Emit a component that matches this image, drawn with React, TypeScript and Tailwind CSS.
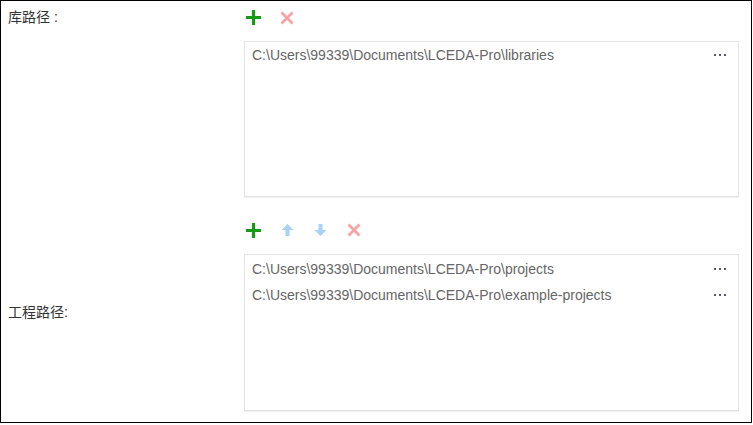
import React from "react";

const font = { fontFamily: '"Liberation Sans", Arial, "Noto Sans CJK SC", sans-serif' };

function Plus() {
  return (
    <svg width="17" height="17" viewBox="0 0 17 17">
      <path d="M8.5 1V16M1 8.5H16" stroke="#169b16" strokeWidth="3.2" />
    </svg>
  );
}
function Cross() {
  return (
    <svg width="14" height="14" viewBox="0 0 14 14">
      <path d="M1.5 1.5L12.5 12.5M12.5 1.5L1.5 12.5" stroke="#f7a3a3" strokeWidth="2.8" />
    </svg>
  );
}
function Arrow({ down }: { down?: boolean }) {
  return (
    <svg width="13" height="14" viewBox="0 0 13 14" style={{ transform: down ? "rotate(180deg)" : undefined }}>
      <path d="M6.5 1L12.5 7H8.5V13H4.5V7H0.5Z" fill="#a8d3f7" />
    </svg>
  );
}
function Dots() {
  return (
    <div className="flex gap-[3px] items-center">
      <span className="w-[2px] h-[2px] bg-[#556]" />
      <span className="w-[2px] h-[2px] bg-[#556]" />
      <span className="w-[2px] h-[2px] bg-[#556]" />
    </div>
  );
}
function Row({ text }: { text: string }) {
  return (
    <div className="h-[26px] flex items-center justify-between pl-[7px] pr-[12px] text-[14px] text-[#666]">
      <span>{text}</span>
      <Dots />
    </div>
  );
}

export default function App() {
  return (
    <div className="w-[753px] h-[425px] bg-white" style={font}>
      <div className="w-[752px] h-[423px] border border-black flex flex-col">
        <div className="flex">
          <div className="w-[243px] pl-[7px] h-[33px] flex items-center text-[14px] text-[#333]">库路径 :</div>
          <div className="flex flex-col">
            <div className="h-[33px] flex items-center pl-[1px]">
              <Plus />
              <span className="ml-[18px]"><Cross /></span>
            </div>
            <div className="mt-[7px] w-[495px] h-[156px] border border-[#e3e3e3] shadow-[0_1px_0_#f0f0f0]">
              <Row text="C:\Users\99339\Documents\LCEDA-Pro\libraries" />
            </div>
          </div>
        </div>
        <div className="flex mt-[16px]">
          <div className="w-[243px] pl-[7px] flex items-center text-[14px] text-[#333]">工程路径:</div>
          <div className="flex flex-col">
            <div className="h-[34px] flex items-center pl-[1px]">
              <Plus />
              <span className="ml-[19px]"><Arrow /></span>
              <span className="ml-[20px]"><Arrow down /></span>
              <span className="ml-[20px]"><Cross /></span>
            </div>
            <div className="mt-[7px] w-[495px] h-[157px] border border-[#e3e3e3] shadow-[0_1px_0_#f0f0f0] pt-[1px]">
              <Row text="C:\Users\99339\Documents\LCEDA-Pro\projects" />
              <Row text="C:\Users\99339\Documents\LCEDA-Pro\example-projects" />
            </div>
          </div>
        </div>
      </div>
    </div>
  );
}
